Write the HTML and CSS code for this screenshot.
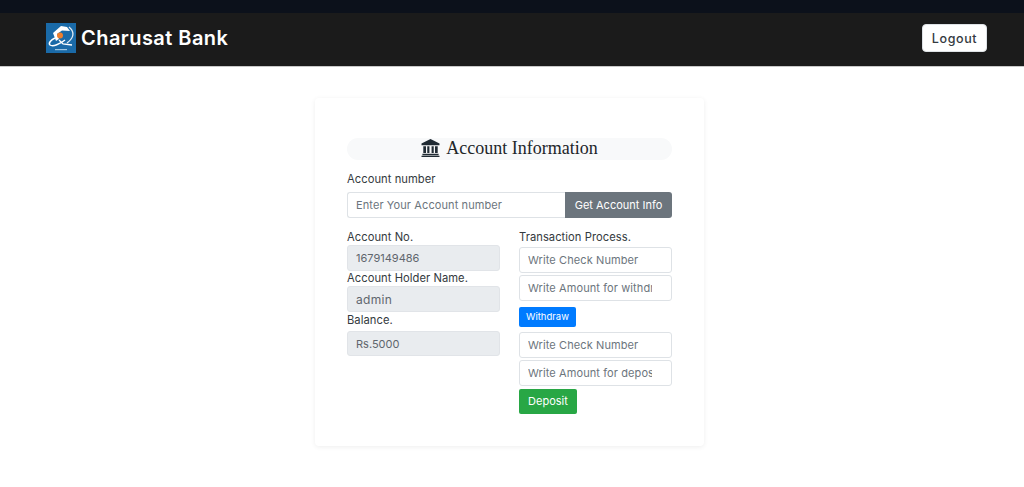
FILE: index.html
```
<!DOCTYPE html>
<html lang="en">
<head>
<meta charset="utf-8">
<title>Charusat Bank</title>
<link rel="stylesheet" href="styles.css">
</head>
<body>
<div class="topstrip"></div>
<nav class="navbar">
  <a class="brand" href="#">
    <svg class="logo" viewBox="0 0 30 30" aria-hidden="true">
      <rect width="30" height="30" fill="#1a6aa8"/>
      <path d="M7 10 L15 3 L21 4 L24 8 L16 7.5 L11 11 L13 16 L10 18 Z" fill="#fff"/>
      <path d="M23 4 C29 9 28 15 21 20" fill="none" stroke="#dfeaf3" stroke-width="1.3"/>
      <path d="M9 15 C5 17 2 20 4 22 C7 24 14 21 19 17" fill="none" stroke="#fff" stroke-width="1.5"/>
      <path d="M13 17 L17 21 L26 22" fill="none" stroke="#fff" stroke-width="1.3"/>
      <circle cx="14" cy="12.5" r="3" fill="#ee7f2d"/>
      <rect x="9" y="26" width="12" height="1.2" fill="#9fc5e0"/>
    </svg>
    <span class="brand-name">Charusat Bank</span>
  </a>
  <button class="btn-logout" type="button">Logout</button>
</nav>
<main class="page">
  <section class="card">
    <h2 class="title">
      <svg class="bank" viewBox="0 0 20 20" aria-hidden="true">
        <path d="M10 0 L20 5 V7 H0 V5 Z" fill="#1f2a33"/>
        <path d="M2 8 H5 V15.5 H2 Z M6.4 8 H8.8 V15.5 H6.4 Z M11.2 8 H13.6 V15.5 H11.2 Z M15 8 H18 V15.5 H15 Z" fill="#1f2a33"/>
        <path d="M1 16.5 H19 V18 H1 Z M0 18.5 H20 V20 H0 Z" fill="#1f2a33"/>
      </svg>
      <span>Account Information</span>
    </h2>
    <label class="label" for="acc">Account number</label>
    <div class="input-group">
      <input id="acc" class="field group-field" type="text" placeholder="Enter Your Account number">
      <button class="btn btn-grey" type="button">Get Account Info</button>
    </div>
    <div class="cols">
      <div class="col">
        <div class="label tight">Account No.</div>
        <input class="field readonly first" type="text" value="1679149486" readonly>
        <div class="label tight l2">Account Holder Name.</div>
        <input class="field readonly name" type="text" value="admin" readonly>
        <div class="label tight l3">Balance.</div>
        <input class="field readonly short" type="text" value="Rs.5000" readonly>
      </div>
      <div class="col">
        <div class="label tight">Transaction Process.</div>
        <input class="field first-right" type="text" placeholder="Write Check Number">
        <input class="field amount gap2" type="text" placeholder="Write Amount for withdraw">
        <button class="btn btn-blue" type="button">Withdraw</button>
        <input class="field gap3" type="text" placeholder="Write Check Number">
        <input class="field amount gap2" type="text" placeholder="Write Amount for deposit">
        <button class="btn btn-green" type="button">Deposit</button>
      </div>
    </div>
  </section>
</main>
</body>
</html>
```
FILE: styles.css
```
* { box-sizing: border-box; }
html, body { margin: 0; padding: 0; }
body {
  background: #fff;
  color: #212529;
  font-family: "Inter", "Liberation Sans", sans-serif;
  font-size: 11px;
  height: 487px;
  overflow: hidden;
}
.topstrip { height: 13px; background: #0c111b; }
.navbar {
  height: 54px;
  background: #1b1b1b;
  border-bottom: 1px solid #c9c9c9;
  display: flex;
  align-items: center;
  justify-content: space-between;
  padding: 0 37px 3px 46px;
}
.brand { display: flex; align-items: center; gap: 5px; text-decoration: none; }
.logo { width: 30px; height: 30px; display: block; }
.brand-name { color: #fff; font-size: 20px; font-weight: 600; letter-spacing: 0.45px; }
.btn-logout {
  width: 65px;
  height: 28px;
  background: #fff;
  border: 1px solid #dee2e6;
  border-radius: 4px;
  color: #343a40;
  font: 500 12.5px "Inter", "Liberation Sans", sans-serif;
  letter-spacing: 0.6px;
  padding: 0;
}
.page { display: flex; justify-content: center; padding: 31px 5px 0 0; }
.card {
  width: 389px;
  height: 348px;
  padding: 40px 32px 0;
  background: #fff;
  border-radius: 4px;
  box-shadow: 0 1px 5px rgba(0, 0, 0, 0.07);
}
.title {
  margin: 0;
  height: 22px;
  padding-bottom: 2px;
  background: #f8f9fa;
  border-radius: 11px;
  display: flex;
  align-items: center;
  justify-content: center;
  gap: 6px;
  font: 400 18px "Liberation Serif", serif;
  color: #212529;
}
.bank { width: 19px; height: 18px; display: block; }
.label { display: block; color: #343a40; line-height: 14px; font-size: 11.2px; letter-spacing: 0.05px; }
.title + .label { margin-top: 12px; }
.input-group { display: flex; margin-top: 6px; height: 26px; }
.field {
  display: block;
  width: 100%;
  height: 26px;
  padding: 0 8px;
  border: 1px solid #dee2e6;
  border-radius: 3px;
  background: #fff;
  color: #495057;
  font: 400 11px "Inter", "Liberation Sans", sans-serif;
  letter-spacing: 0.1px;
  outline: none;
}
.field::placeholder { color: #6c757d; opacity: 1; }
.group-field { flex: 1; min-width: 0; border-radius: 3px 0 0 3px; border-right: 0; }
.btn {
  border: 0;
  border-radius: 2px;
  color: #fff;
  font: 400 11px "Inter", "Liberation Sans", sans-serif;
  padding: 0;
}
.btn-grey { width: 107px; background: #6c757d; border-radius: 0 3px 3px 0; }
.cols { display: grid; grid-template-columns: 153px 153px; justify-content: space-between; margin-top: 12px; }
.tight { height: 14px; }
.readonly { background: #e9ecef; border-color: #e1e4e8; color: #5f666d; letter-spacing: 0; }
.first { margin-top: 1px; }
.first-right { margin-top: 3px; }
.l2 { margin-top: 0; margin-bottom: 1px; }
.l3 { margin-top: 1px; margin-bottom: 4px; }
.name { font-size: 12px; letter-spacing: 0.3px; }
.short { height: 25px; }
.amount { padding-right: 19px; }
.gap2 { margin-top: 2px; }
.gap3 { margin-top: 5px; }
.btn-blue {
  display: block;
  width: 57px;
  height: 20px;
  margin-top: 6px;
  padding-bottom: 2px;
  background: #007bff;
  font-size: 9.5px;
}
.btn-green {
  display: block;
  width: 58px;
  height: 25px;
  margin-top: 3px;
  padding-bottom: 2px;
  background: #28a745;
}
```
